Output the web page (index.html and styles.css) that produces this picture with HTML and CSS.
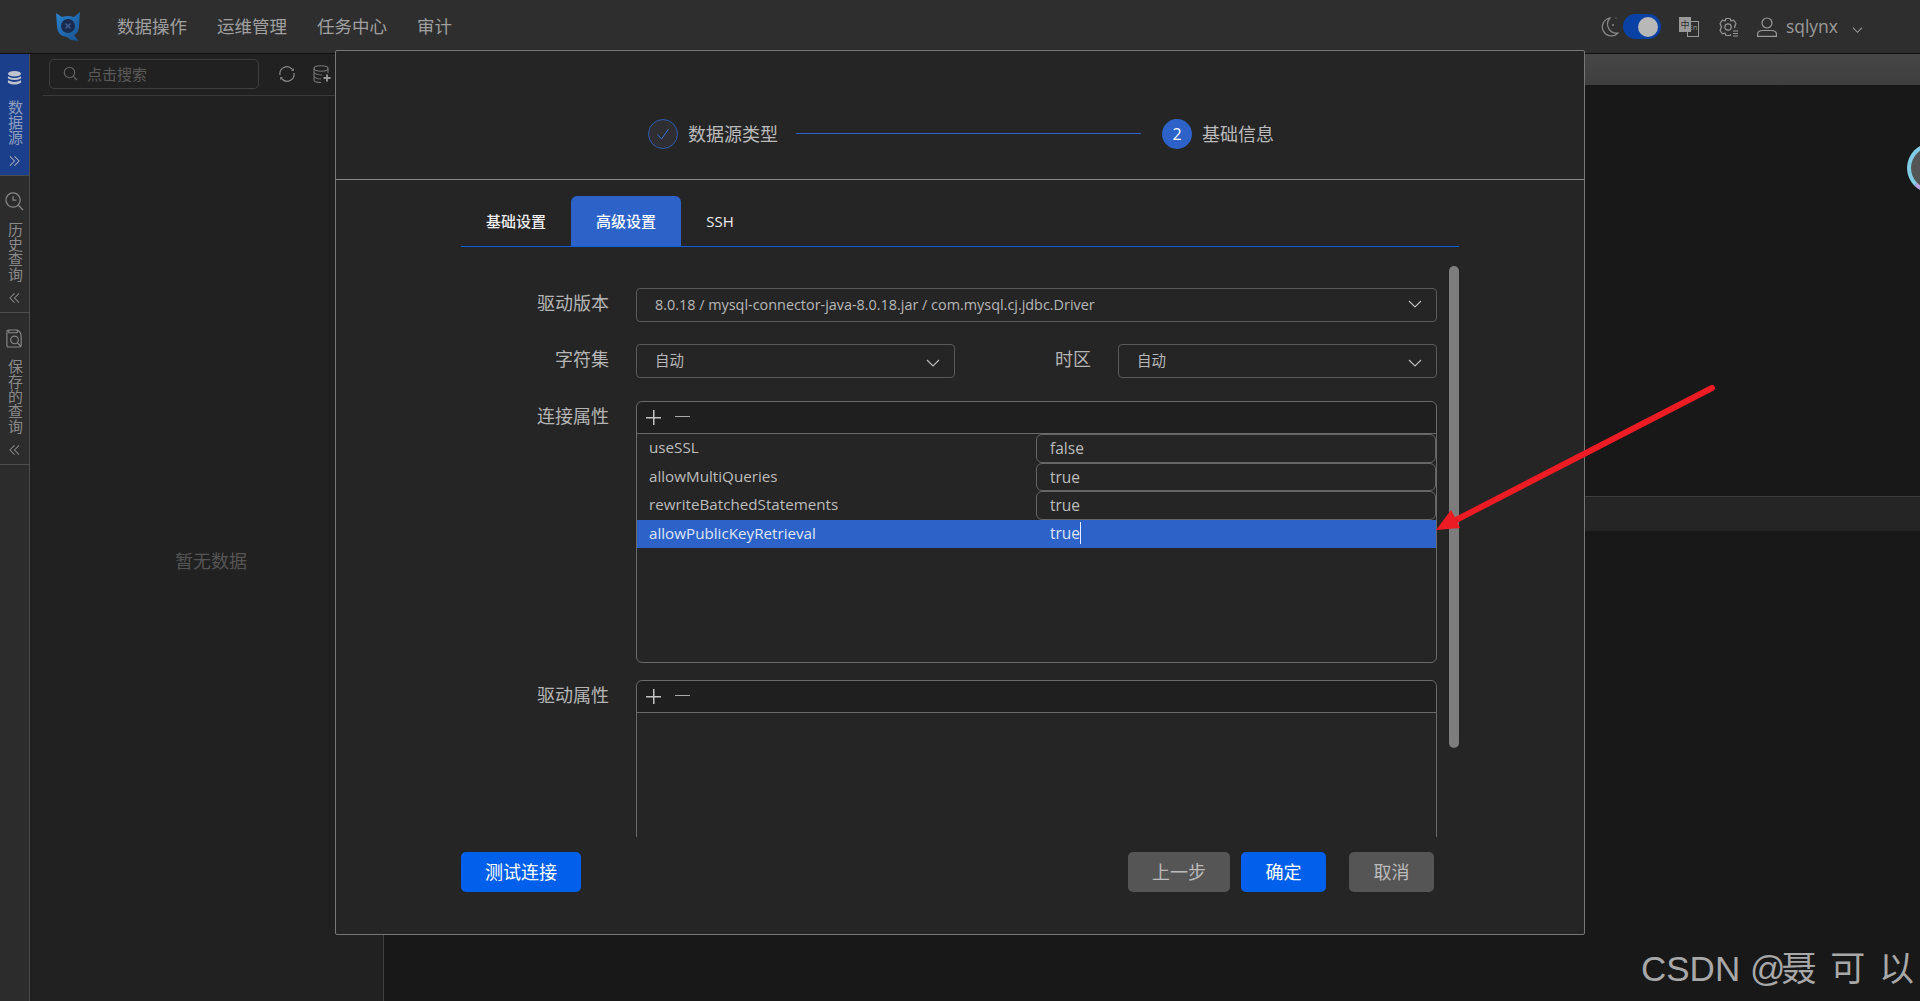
FILE: index.html
```html
<!DOCTYPE html>
<html lang="zh-CN">
<head>
<meta charset="utf-8">
<title>sqlynx</title>
<link rel="stylesheet" href="styles.css">
</head>
<body>
<header class="topbar">
  <svg class="logo" viewBox="0 0 24 29"><defs><linearGradient id="lg" x1="0" y1="0" x2="1" y2="1"><stop offset="0" stop-color="#2c86cf"/><stop offset="1" stop-color="#16508f"/></linearGradient></defs><path d="M0 1 L6 5 Q12 3 18 5 L24 0 L23 14 Q23 21 18 23 L23 29 L15 28 L11 25 Q1 24 1 14Z" fill="url(#lg)"/><circle cx="12" cy="14" r="7" fill="#1a2a4c"/><path d="M9.500 11.500 L14.500 16.500 M14.500 11.500 L9.500 16.500" stroke="#3d5c96" stroke-width="1.500"/></svg>
  <nav class="menu"><span>数据操作</span><span>运维管理</span><span>任务中心</span><span>审计</span></nav>
  <div class="tools">
    <svg class="ic moon" viewBox="0 0 19 21"><path d="M10 2 A9 9 0 1 0 18 17 A9 9 0 0 1 10 2Z" fill="none" stroke="#8a8a8a" stroke-width="1.200"/><circle cx="13" cy="9" r="1" fill="#8a8a8a"/><circle cx="16" cy="2" r=".6" fill="#8a8a8a"/></svg>
    <div class="toggle"><i></i></div>
    <svg class="ic lang" viewBox="0 0 20 20"><rect x="8.500" y="4.500" width="11" height="15" fill="#2e2e2e" stroke="#999" stroke-width="1"/><rect x="0" y="0" width="12" height="15" fill="#999"/><text x="6" y="11" class="lang-zh">中</text><text x="10" y="13" class="lang-en">En</text></svg>
    <svg class="ic gear" viewBox="0 0 20 20"><path d="M13 17.500 L12 18.500 H8 L7 16 L4.500 17 L2 13.500 L3.500 10 L2 6.500 L4.500 3 L7 4 L8 1.500 H12 L13 4 L15.500 3 L18 6.500 L16.500 10 L17 11" fill="none" stroke="#999" stroke-width="1.200" stroke-linejoin="round"/><circle cx="10" cy="10" r="3.200" fill="none" stroke="#999" stroke-width="1.200"/><path d="M15 14h5M15 16.500h5M15 19h5" stroke="#999" stroke-width="1.200"/></svg>
    <svg class="ic user" viewBox="0 0 20 20"><circle cx="10" cy="6" r="5" fill="none" stroke="#999" stroke-width="1.200"/><path d="M.6 19.400 V17 Q.6 13.500 6 13.500 H14 Q19.400 13.500 19.400 17 V19.400Z" fill="none" stroke="#999" stroke-width="1.200"/></svg>
    <span class="uname">sqlynx</span>
    <svg class="ic caret" viewBox="0 0 12 8"><path d="M1 1.500 L6 6.500 L11 1.500" fill="none" stroke="#999" stroke-width="1.200"/></svg>
  </div>
</header>

<div class="main">
  <aside class="rail">
    <div class="rail-item active">
      <svg class="rail-ic db" viewBox="0 0 16 16"><ellipse cx="8" cy="3.500" rx="7" ry="3" fill="#bfc4cf"/><path d="M1 6 Q8 10 15 6 V8.500 Q8 12 1 8.500Z M1 10.500 Q8 14 15 10.500 V13 Q8 17 1 13Z" fill="#bfc4cf"/></svg>
      <span class="rail-text">数据源</span>
      <svg class="rail-chev" viewBox="0 0 12 12"><path d="M1 1 L6 6 L1 11 M6 1 L11 6 L6 11" fill="none" stroke="#aab" stroke-width="1.100"/></svg>
    </div>
    <div class="rail-item">
      <svg class="rail-ic" viewBox="0 0 20 20"><circle cx="8.500" cy="8.500" r="7.500" fill="none" stroke="#888" stroke-width="1.300"/><path d="M8.500 4.500v4h3.500M14 14l5 5" fill="none" stroke="#888" stroke-width="1.300"/></svg>
      <span class="rail-text">历史查询</span>
      <svg class="rail-chev" viewBox="0 0 12 12"><path d="M11 1 L6 6 L11 11 M6 1 L1 6 L6 11" fill="none" stroke="#888" stroke-width="1.100"/></svg>
    </div>
    <div class="rail-item">
      <svg class="rail-ic" viewBox="0 0 20 20"><path d="M4 1H13Q17 3 17 8V17Q17 19 15 19H4Q2 19 2 17V3Q2 1 4 1ZM4 1V4H13V1" fill="none" stroke="#888" stroke-width="1.200"/><circle cx="10" cy="11.500" r="4" fill="none" stroke="#888" stroke-width="1.200"/><path d="M13 14.500l4 4" stroke="#888" stroke-width="1.200"/></svg>
      <span class="rail-text">保存的查询</span>
      <svg class="rail-chev" viewBox="0 0 12 12"><path d="M11 1 L6 6 L11 11 M6 1 L1 6 L6 11" fill="none" stroke="#888" stroke-width="1.100"/></svg>
    </div>
  </aside>

  <section class="sidebar">
    <div class="search-row">
      <div class="search">
        <svg class="search-ic" viewBox="0 0 15 15"><circle cx="6.500" cy="6.500" r="5.200" fill="none" stroke="#666" stroke-width="1.100"/><path d="M10.500 10.500l3.500 3.500" stroke="#666" stroke-width="1.100"/></svg>
        <span>点击搜索</span>
      </div>
      <svg class="side-ic" viewBox="0 0 18 18"><path d="M2 10A7 7 0 0 1 14 4M16 8A7 7 0 0 1 4 14" fill="none" stroke="#8a8a8a" stroke-width="1.200"/><path d="M13 5.500l3 .5-.5-3zM5 12.500l-3-.5.500 3z" fill="#8a8a8a"/></svg>
      <svg class="side-ic" viewBox="0 0 18 18"><ellipse cx="8" cy="3.500" rx="7" ry="2.700" fill="none" stroke="#777" stroke-width="1.100"/><path d="M1 3.500V15Q1 17.500 8 17.500M15 3.500V8M1 7.500Q3 10 9 10M1 11.500Q3 14 8 14" fill="none" stroke="#777" stroke-width="1.100"/><path d="M14 9.500v7M10.500 13h7" stroke="#999" stroke-width="1.800"/></svg>
    </div>
    <div class="empty">暂无数据</div>
  </section>

  <section class="content">
    <div class="strip-top"></div>
    <div class="pane-top">
      <div class="ring"></div>
    </div>
    <div class="strip-mid"></div>
  </section>
</div>

<div class="modal">
  <div class="steps">
    <div class="step-dot done"><svg viewBox="0 0 14 14"><path d="M1.500 7.500L5.500 12 12.500 2" fill="none" stroke="#3a6fd0" stroke-width="1"/></svg></div>
    <span class="step-label">数据源类型</span>
    <div class="step-line"></div>
    <div class="step-dot current">2</div>
    <span class="step-label">基础信息</span>
  </div>

  <div class="body">
    <div class="tabs">
      <div class="tab">基础设置</div>
      <div class="tab on">高级设置</div>
      <div class="tab">SSH</div>
    </div>
    <div class="scroller">
      <div class="form">
        <div class="row r1">
          <label>驱动版本</label>
          <div class="select wide"><span>8.0.18 / mysql-connector-java-8.0.18.jar / com.mysql.cj.jdbc.Driver</span><svg viewBox="0 0 14 8"><path d="M1 1l6 6 6-6" fill="none" stroke="#bbb" stroke-width="1.200"/></svg></div>
        </div>
        <div class="row r2">
          <label>字符集</label>
          <div class="select half"><span>自动</span><svg viewBox="0 0 14 8"><path d="M1 1l6 6 6-6" fill="none" stroke="#bbb" stroke-width="1.200"/></svg></div>
          <label class="tz">时区</label>
          <div class="select half"><span>自动</span><svg viewBox="0 0 14 8"><path d="M1 1l6 6 6-6" fill="none" stroke="#bbb" stroke-width="1.200"/></svg></div>
        </div>
        <div class="row r3">
          <label>连接属性</label>
          <div class="props tall">
            <div class="props-head"><span class="plus"></span><span class="minus"></span></div>
            <div class="prop"><div class="k">useSSL</div><div class="v boxed">false</div></div>
            <div class="prop"><div class="k">allowMultiQueries</div><div class="v boxed">true</div></div>
            <div class="prop"><div class="k">rewriteBatchedStatements</div><div class="v boxed">true</div></div>
            <div class="prop sel"><div class="k">allowPublicKeyRetrieval</div><div class="v"><span class="caretline">true</span></div></div>
          </div>
        </div>
        <div class="row r4">
          <label>驱动属性</label>
          <div class="props clipped">
            <div class="props-head"><span class="plus"></span><span class="minus"></span></div>
          </div>
        </div>
      </div>
      <div class="thumb"></div>
    </div>
    <div class="actions">
      <button class="btn blue test">测试连接</button>
      <div class="spacer"></div>
      <button class="btn gray prev">上一步</button>
      <button class="btn blue ok">确定</button>
      <button class="btn gray cancel">取消</button>
    </div>
  </div>
</div>

<svg class="arrow" viewBox="0 0 280 149"><path d="M276 3 L20 135" stroke="#ed1c24" stroke-width="6" stroke-linecap="round"/><path d="M0 145 L15 125 L21 136 L24 143Z" fill="#ed1c24"/></svg>
<div class="mark">CSDN @<span class="mark-name">聂 可 以</span></div>
</body>
</html>
```
FILE: styles.css
```css
* { box-sizing: border-box; }
html, body { margin: 0; height: 100%; }
body {
  width: 1920px; height: 1001px; overflow: hidden; position: relative;
  display: flex; flex-direction: column;
  background: #181818; color: #bbb;
  font-family: "Open Sans", "Noto Sans CJK SC", sans-serif;
}
.topbar {
  height: 54px; flex: none; display: flex; align-items: center;
  background: #2e2e2e; border-bottom: 1px solid #0e0e0e;
  padding: 0 57px 0 56px;
}
.logo { width: 24px; height: 29px; flex: none; }
.menu { display: flex; gap: 30px; margin-left: 37px; margin-top: -2px; font-size: 17.500px; color: #a0a0a0; }
.tools { margin-left: auto; display: flex; align-items: center; color: #999; }
.ic { display: block; flex: none; }
.moon { width: 19px; height: 21px; }
.toggle { width: 38px; height: 25px; border-radius: 13px; background: #0a41a4; margin-left: 4px; position: relative; }
.toggle i { position: absolute; right: 3px; top: 2.500px; width: 20px; height: 20px; border-radius: 50%; background: #b8b8b8; }
.lang { width: 20px; height: 20px; margin-left: 18px; }
.lang-zh { font-size: 9px; fill: #2e2e2e; text-anchor: middle; }
.lang-en { font-size: 7px; fill: #999; }
.gear { width: 20px; height: 20px; margin-left: 19px; }
.user { width: 20px; height: 20px; margin-left: 19px; }
.uname { font-size: 17.500px; margin-left: 9px; color: #9a9a9a; position: relative; top: -1px; }
.caret { width: 11px; height: 8px; margin-left: 14px; margin-top: 6px; }

.main { flex: 1; display: flex; min-height: 0; }
.rail { width: 30px; flex: none; background: #2c2c2c; border-right: 1px solid #4d4d4d; }
.rail-item {
  display: flex; flex-direction: column; align-items: center;
  padding: 16px 0 8px; border-bottom: 1px solid #4d4d4d; color: #8a8a8a;
}
.rail-item.active { background: #1c3f8b; color: #8f9fbf; }
.rail-ic { width: 19px; height: 19px; display: block; }
.rail-ic.db { width: 15px; height: 16px; }
.rail-text { writing-mode: vertical-rl; text-orientation: upright; font-size: 15px; line-height: 15px; margin-top: 11px; }
.active .rail-text { margin-top: 14px; }
.rail-chev { width: 11px; height: 12px; margin-top: 10px; display: block; }

.sidebar { width: 354px; flex: none; background: #212121; border-right: 1px solid #3f3f3f; display: flex; flex-direction: column; }
.search-row { height: 42px; margin-left: 13px; display: flex; align-items: flex-start; padding: 5px 0 0 6px; border-bottom: 1px solid #3a3a3a; gap: 19px; }
.search { width: 210px; height: 30px; border: 1px solid #3e3e3e; border-radius: 5px; display: flex; align-items: center; padding: 0 0 2px 13px; gap: 9px; font-size: 15px; color: #5a5a5a; }
.search-ic { width: 15px; height: 15px; }
.side-ic { width: 18px; height: 18px; margin-top: 6px; flex: none; }
.side-ic + .side-ic { margin-left: -2px; }
.empty { text-align: center; font-size: 18px; color: #555; margin-top: 451px; margin-left: 9px; }

.content { flex: 1; display: flex; flex-direction: column; background: #181818; }
.strip-top { height: 31px; background: linear-gradient(#464646, #3f3f3f); }
.pane-top { height: 412px; border-bottom: 1px solid #3d3d3d; position: relative; overflow: hidden; }
.ring { position: absolute; right: -37px; top: 58px; width: 50px; height: 50px; border-radius: 50%; background: #555; border: 4px solid #82cde6; border-bottom-color: #b6a6e6; }
.strip-mid { height: 34px; background: #252525; }

.modal {
  position: absolute; left: 335px; top: 50px; width: 1250px; height: 885px;
  background: #252525; border: 1px solid #777; border-radius: 2px;
  display: flex; flex-direction: column;
}
.steps { height: 129px; flex: none; border-bottom: 1px solid #8a8a8a; display: flex; align-items: center; padding: 37px 0 0 312px; font-size: 18px; color: #bbb; }
.step-dot { width: 30px; height: 30px; border-radius: 50%; flex: none; display: flex; align-items: center; justify-content: center; font-size: 16px; }
.step-dot.done { border: 1px solid #2d5cb0; background: #2f2f33; }
.step-dot.done svg { width: 14px; height: 14px; }
.step-dot.current { background: #2d63c8; color: #fff; }
.step-label { margin-left: 10px; padding-bottom: 2px; }
.step-line { width: 345px; height: 1px; background: #2d63c8; margin: 0 21px 0 18px; }

.body { flex: 1; min-height: 0; padding: 16px 125px 0; display: flex; flex-direction: column; }
.tabs { display: flex; height: 51px; flex: none; border-bottom: 1px solid #0b5fe0; font-size: 15px; color: #eee; }
.tab { width: 110px; display: flex; align-items: center; justify-content: center; font-weight: 500; padding-bottom: 1px; }
.tab:last-child { width: 78px; }
.tab.on { background: #2d63c8; color: #fff; border-radius: 6px 6px 0 0; }
.scroller { display: flex; height: 571px; margin-top: 19px; flex: none; overflow: hidden; gap: 12px; }
.form { width: 976px; flex: none; padding-top: 22px; }
.row { display: flex; align-items: flex-start; margin-bottom: 22px; }
.row label { width: 148px; margin-right: 27px; text-align: right; font-size: 18px; line-height: 30px; color: #b5b5b5; flex: none; white-space: nowrap; }
.row label.tz { width: 36px; margin: 0 27px 0 100px; }
.r3 { margin-bottom: 17px; margin-top: 23px; }
.select { height: 34px; border: 1px solid #5a5a5a; border-radius: 4px; display: flex; align-items: center; padding: 0 14px 2px 18px; justify-content: space-between; font-size: 14.400px; color: #b8b8b8; flex: none; }
.select svg { width: 14px; height: 8px; flex: none; }
.wide { width: 801px; }
.half { width: 319px; padding-bottom: 4px; }
.half svg { margin-top: 7px; }
.props { width: 801px; flex: none; border: 1px solid #6a6a6a; border-radius: 6px; }
.tall { height: 262px; }
.clipped { height: 300px; }
.props-head { height: 32px; background: #1f1f1f; border-bottom: 1px solid #6a6a6a; border-radius: 6px 6px 0 0; display: flex; align-items: center; padding-left: 9px; gap: 14px; }
.plus { width: 15px; height: 15px; display: block; background: linear-gradient(#c4c4c4,#c4c4c4) center/100% 1.500px no-repeat, linear-gradient(#c4c4c4,#c4c4c4) center/1.500px 100% no-repeat; }
.minus { width: 15px; height: 1.500px; background: #aaa; margin-top: -2px; }
.prop { height: 28.500px; display: flex; font-size: 15.200px; color: #bdbdbd; }
.prop .k { width: 399px; padding-left: 12px; line-height: 27px; }
.prop .v { flex: 1; padding-left: 13px; line-height: 26px; font-size: 15.500px; }
.v.boxed { border: 1px solid #666; border-radius: 6px; }
.prop.sel { background: #2d63c8; color: #dfe6f5; }
.prop.sel .v { padding-left: 14px; }
.caretline { border-right: 1px solid #e8eeff; }
.thumb { width: 10px; height: 482px; flex: none; background: #7d7d7d; border-radius: 5px; }

.actions { display: flex; margin-top: 15px; height: 40px; flex: none; }
.spacer { flex: 1; }
.btn { border: 0; border-radius: 5px; height: 40px; font-family: inherit; font-size: 18px; padding: 0 0 2px; }
.blue { background: #0060ec; color: #fff; }
.gray { background: #555; color: #bbb; }
.test { width: 120px; }
.prev { width: 102px; margin-right: 11px; }
.ok { width: 85px; margin-right: 23px; }
.cancel { width: 85px; margin-right: 25px; }

.arrow { position: absolute; left: 1436px; top: 385px; width: 280px; height: 149px; }
.mark { position: absolute; left: 1641px; top: 940px; font-family: "Liberation Sans", "Noto Sans CJK SC", sans-serif; font-size: 35px; color: #a8a8a8; white-space: nowrap; }
.mark-name { word-spacing: 4px; margin-left: -4px; }
```
